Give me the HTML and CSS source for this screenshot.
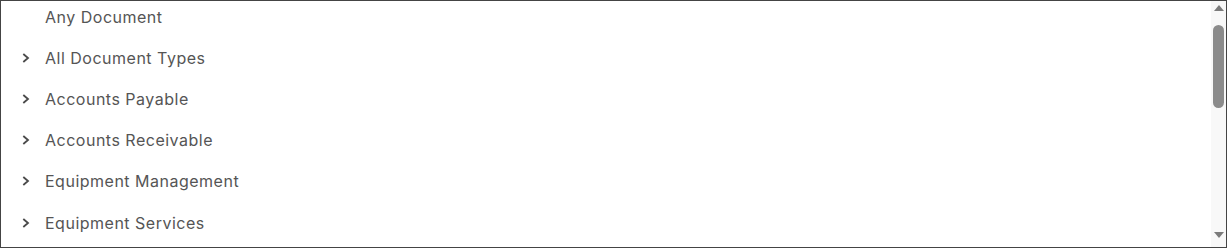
FILE: index.html
```html
<!DOCTYPE html>
<html lang="en">
<head>
    <meta charset="UTF-8">
    <title>Document Types</title>
    <link rel="stylesheet" href="styles.css">
</head>
<body>
    <div class="tree">
        <div class="tree-viewport" id="viewport">
            <ul class="tree-list">
                <li class="tree-item leaf"><span class="toggle"></span><span class="label">Any Document</span></li>
                <li class="tree-item"><span class="toggle"><svg viewBox="0 0 8 10" width="8" height="10"><path d="M1.3 1 L6 5 L1.3 9" fill="none" stroke="#4a4a4a" stroke-width="1.8"/></svg></span><span class="label">All Document Types</span></li>
                <li class="tree-item"><span class="toggle"><svg viewBox="0 0 8 10" width="8" height="10"><path d="M1.3 1 L6 5 L1.3 9" fill="none" stroke="#4a4a4a" stroke-width="1.8"/></svg></span><span class="label">Accounts Payable</span></li>
                <li class="tree-item"><span class="toggle"><svg viewBox="0 0 8 10" width="8" height="10"><path d="M1.3 1 L6 5 L1.3 9" fill="none" stroke="#4a4a4a" stroke-width="1.8"/></svg></span><span class="label">Accounts Receivable</span></li>
                <li class="tree-item"><span class="toggle"><svg viewBox="0 0 8 10" width="8" height="10"><path d="M1.3 1 L6 5 L1.3 9" fill="none" stroke="#4a4a4a" stroke-width="1.8"/></svg></span><span class="label">Equipment Management</span></li>
                <li class="tree-item"><span class="toggle"><svg viewBox="0 0 8 10" width="8" height="10"><path d="M1.3 1 L6 5 L1.3 9" fill="none" stroke="#4a4a4a" stroke-width="1.8"/></svg></span><span class="label">Equipment Services</span></li>
            </ul>
        </div>
        <div class="scrollbar">
            <div class="sb-btn sb-up"><span class="arrow-up"></span></div>
            <div class="sb-track"><div class="sb-thumb"></div></div>
            <div class="sb-btn sb-down"><span class="arrow-down"></span></div>
        </div>
    </div>
</body>
</html>
```

FILE: styles.css
```css
* {
    margin: 0;
    padding: 0;
    box-sizing: border-box;
}

html, body {
    height: 100%;
    background: #fff;
}

body {
    font-family: "Inter", sans-serif;
    color: #555;
}

.tree {
    display: flex;
    height: 100%;
    border: 1px solid #444;
}

.tree-viewport {
    flex: 1;
    overflow: hidden;
}

.tree-list {
    list-style: none;
    margin-top: -5px;
}

.tree-item {
    display: flex;
    align-items: center;
    height: 41.2px;
    font-size: 16px;
    letter-spacing: 0.5px;
}

.toggle {
    display: flex;
    align-items: center;
    justify-content: center;
    width: 44px;
    padding-left: 6px;
}

.label {
    line-height: 20px;
}

/* fake classic scrollbar */
.scrollbar {
    display: flex;
    flex-direction: column;
    width: 15px;
    background: #f8f8f8;
}

.sb-btn {
    display: flex;
    justify-content: center;
    height: 15px;
}

.sb-up {
    padding-top: 4px;
}

.sb-down {
    padding-top: 0;
}

.arrow-up,
.arrow-down {
    width: 0;
    height: 0;
    border-left: 5px solid transparent;
    border-right: 5px solid transparent;
}

.arrow-up {
    border-bottom: 6px solid #7b7b7b;
}

.arrow-down {
    border-top: 6px solid #7b7b7b;
}

.sb-track {
    flex: 1;
    padding: 9px 2px 0;
}

.sb-thumb {
    height: 83px;
    border-radius: 6px;
    background: #8b8b8b;
}
```
